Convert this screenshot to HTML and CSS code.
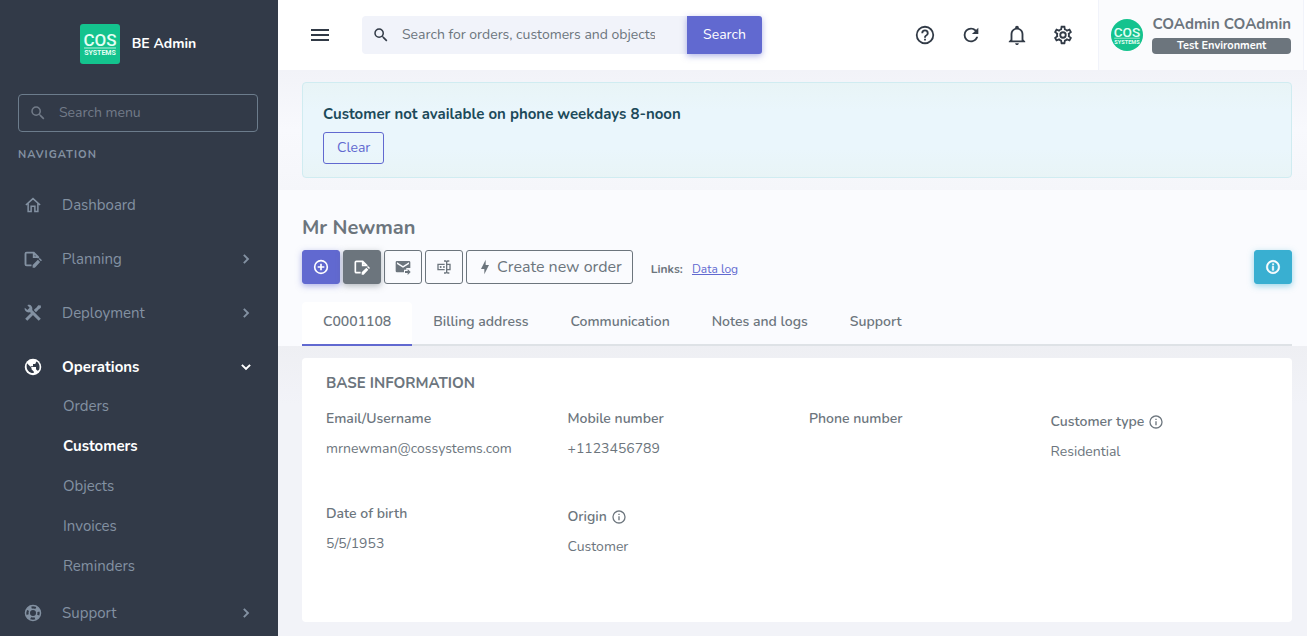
FILE: index.html
```
<!DOCTYPE html>
<html lang="en">
<head>
  <meta charset="utf-8">
  <title>BE Admin - Mr Newman</title>
  <link rel="stylesheet" href="styles.css">
</head>
<body>

  <!-- shared icons -->
  <svg class="icon-defs" aria-hidden="true">
    <symbol id="magnify" viewBox="0 0 24 24"><path d="M9.5,3A6.5,6.5 0 0,1 16,9.5C16,11.11 15.41,12.59 14.44,13.73L14.71,14H15.5L20.5,19L19,20.5L14,15.5V14.71L13.73,14.44C12.59,15.41 11.11,16 9.5,16A6.5,6.5 0 0,1 3,9.5A6.5,6.5 0 0,1 9.5,3M9.5,5C7,5 5,7 5,9.5C5,12 7,14 9.5,14C12,14 14,12 14,9.5C14,7 12,5 9.5,5Z"/></symbol>
    <symbol id="chevron" viewBox="0 0 24 24"><path d="M8.2,16.6L12.8,12L8.2,7.4L10,5.6L16.4,12L10,18.4Z"/></symbol>
    <symbol id="file-edit" viewBox="0 0 24 24"><path d="M10 20.5H3.5Q2 20.5 2 19V5Q2 3.5 3.5 3.5H13L19 9.5V11M13 3.5V9.5H19" fill="none" stroke="currentColor" stroke-width="2.5"/><path d="M11.5 23.5V20L18.5 13L21.5 16L14.5 23.5ZM19.5 12L21 10.5L24 13.5L22.5 15Z"/></symbol>
    <symbol id="info" viewBox="0 0 24 24"><path d="M11,9H13V7H11M12,20C7.59,20 4,16.41 4,12C4,7.59 7.59,4 12,4C16.41,4 20,7.59 20,12C20,16.41 16.41,20 12,20M12,2A10,10 0 0,0 2,12A10,10 0 0,0 12,22A10,10 0 0,0 22,12A10,10 0 0,0 12,2M11,17H13V11H11V17Z"/></symbol>
    <symbol id="cos" viewBox="0 0 40 40">
      <rect width="40" height="40" fill="#14c38e"/>
      <text x="20" y="22" text-anchor="middle" font-family="Roboto, sans-serif" font-size="17" font-weight="500" fill="#e4fff5">COS</text>
      <path d="M4 24H36" stroke="#b5f0dc"/>
      <text x="20" y="31" text-anchor="middle" font-family="Roboto, sans-serif" font-size="7" font-weight="700" fill="#e4fff5">SYSTEMS</text>
    </symbol>
  </svg>

  <div class="wrapper">
    <aside class="sidebar">
      <a class="brand" href="#">
        <svg class="brand-logo"><use href="#cos"/></svg>
        <span>BE Admin</span>
      </a>

      <label class="menu-search">
        <svg class="icon"><use href="#magnify"/></svg>
        <input type="search" placeholder="Search menu" aria-label="Search menu">
      </label>

      <h6 class="nav-title">NAVIGATION</h6>

      <nav>
        <ul class="menu">
          <li>
            <a href="#">
              <svg class="icon" viewBox="0 0 24 24"><path d="M2.5 12L12 3.5L21.5 12M5.500 10V20.5H9.5V13.5H14.5V20.5H18.5V10" fill="none" stroke="currentColor" stroke-width="2"/></svg>
              <span>Dashboard</span>
            </a>
          </li>
          <li>
            <a href="#">
              <svg class="icon"><use href="#file-edit"/></svg>
              <span>Planning</span>
              <svg class="arrow"><use href="#chevron"/></svg>
            </a>
          </li>
          <li>
            <a href="#">
              <svg class="icon" viewBox="0 0 24 24"><path d="M7.5 7.5L21 21M3 21L11 13M14.5 9.5L17 7" fill="none" stroke="currentColor" stroke-width="4"/><path d="M1 5L4.5 8L7.5 5L4.5 1.5C8 0 12 3 11 8L8 11C4 12 0 9 1 5ZM14 8L19 1.5L22.5 2L22.5 5L16 10Z"/></svg>
              <span>Deployment</span>
              <svg class="arrow"><use href="#chevron"/></svg>
            </a>
          </li>
          <li class="open">
            <a class="active" href="#">
              <svg class="icon" viewBox="0 0 24 24"><circle cx="12" cy="12" r="11"/><path d="M4 7L10 13V15L13 18V20C8 20.5 3 17 3.5 10ZM9 11H12V8H15L16.5 4.5C20 6 22 11 20 16L18 17L16 15V12H9Z" fill="#323a48"/></svg>
              <span>Operations</span>
              <svg class="arrow"><use href="#chevron"/></svg>
            </a>
            <ul class="submenu">
              <li><a href="#">Orders</a></li>
              <li><a class="active" href="#">Customers</a></li>
              <li><a href="#">Objects</a></li>
              <li><a href="#">Invoices</a></li>
              <li><a href="#">Reminders</a></li>
            </ul>
          </li>
          <li>
            <a href="#">
              <svg class="icon" viewBox="0 0 24 24" fill="none" stroke="currentColor"><circle cx="12" cy="12" r="10" stroke-width="2"/><circle cx="12" cy="12" r="5" stroke-width="2"/><circle cx="12" cy="12" r="7.5" stroke-width="5" stroke-dasharray="5.89" stroke-dashoffset="-2.95"/></svg>
              <span>Support</span>
              <svg class="arrow"><use href="#chevron"/></svg>
            </a>
          </li>
        </ul>
      </nav>
    </aside>

    <div class="page">
      <header class="topbar">
        <button class="icon-btn menu-toggle" type="button" aria-label="Toggle menu">
          <svg viewBox="0 0 24 24"><path d="M3,6H21V8H3V6M3,11H21V13H3V11M3,16H21V18H3V16Z"/></svg>
        </button>

        <form class="search">
          <label class="search-box">
            <svg class="icon"><use href="#magnify"/></svg>
            <input type="search" placeholder="Search for orders, customers and objects" aria-label="Search">
          </label>
          <button type="button">Search</button>
        </form>

        <div class="tools">
          <button class="icon-btn" type="button" aria-label="Help">
            <svg viewBox="0 0 24 24"><path d="M11,18H13V16H11V18M12,2A10,10 0 0,0 2,12A10,10 0 0,0 12,22A10,10 0 0,0 22,12A10,10 0 0,0 12,2M12,20C7.59,20 4,16.41 4,12C4,7.59 7.59,4 12,4C16.41,4 20,7.59 20,12C20,16.41 16.41,20 12,20M12,6A4,4 0 0,0 8,10H10A2,2 0 0,1 12,8A2,2 0 0,1 14,10C14,12 11,11.75 11,15H13C13,12.75 16,12.5 16,10A4,4 0 0,0 12,6Z"/></svg>
          </button>
          <button class="icon-btn" type="button" aria-label="Refresh">
            <svg viewBox="0 0 24 24"><path d="M17.65,6.35C16.2,4.9 14.21,4 12,4A8,8 0 0,0 4,12A8,8 0 0,0 12,20C15.73,20 18.84,17.45 19.73,14H17.65C16.83,16.33 14.61,18 12,18A6,6 0 0,1 6,12A6,6 0 0,1 12,6C13.66,6 15.14,6.69 16.22,7.78L13,11H20V4L17.65,6.35Z"/></svg>
          </button>
          <button class="icon-btn" type="button" aria-label="Notifications">
            <svg viewBox="0 0 24 24"><path d="M10 21H14C14 22.1 13.1 23 12 23S10 22.1 10 21M21 19V20H3V19L5 17V11C5 7.9 7 5.2 10 4.3V4C10 2.9 10.9 2 12 2S14 2.9 14 4V4.3C17 5.2 19 7.9 19 11V17L21 19M17 11C17 8.2 14.8 6 12 6S7 8.2 7 11V18H17V11Z"/></svg>
          </button>
          <button class="icon-btn" type="button" aria-label="Settings">
            <svg viewBox="0 0 24 24"><path d="M12,8A4,4 0 0,1 16,12A4,4 0 0,1 12,16A4,4 0 0,1 8,12A4,4 0 0,1 12,8M12,10A2,2 0 0,0 10,12A2,2 0 0,0 12,14A2,2 0 0,0 14,12A2,2 0 0,0 12,10M10,22C9.75,22 9.54,21.82 9.5,21.58L9.13,18.93C8.5,18.68 7.96,18.34 7.44,17.94L4.95,18.95C4.73,19.03 4.46,18.95 4.34,18.73L2.34,15.27C2.21,15.05 2.27,14.78 2.46,14.63L4.57,12.97L4.5,12L4.57,11L2.46,9.37C2.27,9.22 2.21,8.95 2.34,8.73L4.34,5.27C4.46,5.05 4.73,4.96 4.95,5.05L7.44,6.05C7.96,5.66 8.5,5.32 9.13,5.07L9.5,2.42C9.54,2.18 9.75,2 10,2H14C14.25,2 14.46,2.18 14.5,2.42L14.87,5.07C15.5,5.32 16.04,5.66 16.56,6.05L19.05,5.05C19.27,4.96 19.54,5.05 19.66,5.27L21.66,8.73C21.79,8.95 21.73,9.22 21.54,9.37L19.43,11L19.5,12L19.43,13L21.54,14.63C21.73,14.78 21.79,15.05 21.66,15.27L19.66,18.73C19.54,18.95 19.27,19.04 19.05,18.95L16.56,17.95C16.04,18.34 15.5,18.68 14.87,18.93L14.5,21.58C14.46,21.82 14.25,22 14,22H10M11.25,4L10.88,6.61C9.68,6.86 8.62,7.5 7.85,8.39L5.44,7.35L4.69,8.65L6.8,10.2C6.4,11.37 6.4,12.64 6.8,13.8L4.68,15.36L5.43,16.66L7.86,15.62C8.63,16.5 9.68,17.14 10.87,17.38L11.24,20H12.76L13.13,17.39C14.32,17.14 15.37,16.5 16.14,15.62L18.57,16.66L19.32,15.36L17.2,13.81C17.6,12.64 17.6,11.37 17.2,10.2L19.31,8.65L18.56,7.35L16.15,8.39C15.38,7.5 14.32,6.86 13.12,6.62L12.75,4H11.25Z"/></svg>
          </button>
        </div>

        <a class="user" href="#">
          <svg class="avatar"><use href="#cos"/></svg>
          <span class="user-text">
            <span class="user-name">COAdmin COAdmin</span>
            <span class="badge">Test Environment</span>
          </span>
        </a>
      </header>

      <section class="notice">
        <div class="alert" role="alert">
          <strong>Customer not available on phone weekdays 8-noon</strong>
          <button class="btn-clear" type="button">Clear</button>
        </div>
      </section>

      <section class="page-head">
        <h4>Mr Newman</h4>
        <div class="actions">
          <button class="btn btn-primary" type="button" aria-label="Add">
            <svg viewBox="0 0 24 24" fill="none" stroke="currentColor" stroke-width="2.5"><circle cx="12" cy="12" r="9.5"/><path d="M12 7V17M7 12H17"/></svg>
          </button>
          <button class="btn btn-secondary" type="button" aria-label="Edit">
            <svg><use href="#file-edit"/></svg>
          </button>
          <button class="btn" type="button" aria-label="Send email">
            <svg viewBox="0 0 24 24"><path d="M3 3H21Q23 3 23 5V13.5H17V16H13.5V20H3Q1 20 1 18V5Q1 3 3 3ZM3 5V7.5L12 13L21 7.5V5L12 10.5Z"/><path d="M15 18H19V15L23.5 19.5L19 24V21H15Z"/></svg>
          </button>
          <button class="btn" type="button" aria-label="Rename">
            <svg viewBox="0 0 24 24"><path d="M17,7H22V17H17V19A1,1 0 0,0 18,20H20V22H17.5C16.95,22 16,21.55 16,21C16,21.55 15.05,22 14.5,22H12V20H14A1,1 0 0,0 15,19V5A1,1 0 0,0 14,4H12V2H14.5C15.05,2 16,2.45 16,3C16,2.45 16.95,2 17.5,2H20V4H18A1,1 0 0,0 17,5V7M2,7H13V9H4V15H13V17H2V7M20,15V9H17V15H20M8.5,12A1.5,1.5 0 0,0 7,10.5A1.5,1.5 0 0,0 5.5,12A1.5,1.5 0 0,0 7,13.5A1.5,1.5 0 0,0 8.5,12M13,10.89C12.39,10.33 11.44,10.38 10.88,11C10.32,11.6 10.37,12.55 11,13.11C11.55,13.63 12.43,13.63 13,13.11V10.89Z"/></svg>
          </button>
          <button class="btn btn-order" type="button">
            <svg viewBox="0 0 24 24"><path d="M11 15H6L13 1V9H18L11 23V15Z"/></svg>
            Create new order
          </button>
          <span class="links">Links: <a href="#">Data log</a></span>
          <button class="btn btn-info" type="button" aria-label="Info">
            <svg stroke="currentColor"><use href="#info"/></svg>
          </button>
        </div>

        <nav class="tabs">
          <a class="active" href="#">C0001108</a>
          <a href="#">Billing address</a>
          <a href="#">Communication</a>
          <a href="#">Notes and logs</a>
          <a href="#">Support</a>
        </nav>
      </section>

      <main class="content">
        <div class="card">
          <h5>BASE INFORMATION</h5>
          <dl class="fields">
            <div><dt>Email/Username</dt><dd>mrnewman@cossystems.com</dd></div>
            <div><dt>Mobile number</dt><dd>+1123456789</dd></div>
            <div><dt>Phone number</dt><dd></dd></div>
            <div><dt class="has-info">Customer type <svg><use href="#info"/></svg></dt><dd>Residential</dd></div>
            <div><dt>Date of birth</dt><dd>5/5/1953</dd></div>
            <div><dt class="has-info">Origin <svg><use href="#info"/></svg></dt><dd>Customer</dd></div>
          </dl>
        </div>
      </main>
    </div>
  </div>

</body>
</html>
```
FILE: styles.css
```
* {
  box-sizing: border-box;
}

body {
  margin: 0;
  font-family: Nunito, Lato, sans-serif;
  font-size: 15px;
  line-height: 22px;
  color: #6c757d;
  background: #fafbfe;
}

a {
  color: inherit;
  text-decoration: none;
}

ul, dl, dd, h4, h5, h6 {
  margin: 0;
  padding: 0;
}

ul {
  list-style: none;
}

button, input {
  font: inherit;
}

button {
  cursor: pointer;
}

svg {
  flex: none;
}

svg:not([fill]) {
  fill: currentColor;
}

.icon-defs {
  display: none;
}

.icon {
  width: 18px;
  height: 18px;
}

.wrapper {
  display: flex;
  min-height: 100vh;
}

/* sidebar */
.sidebar {
  width: 278px;
  flex: none;
  padding: 24px 20px 0 18px;
  color: #8391a2;
  background: #323a48;
}

.brand {
  display: flex;
  align-items: center;
  justify-content: center;
  gap: 12px;
  height: 40px;
  margin-bottom: 30px;
  font-size: 14px;
  font-weight: 700;
  color: #fff;
}

.brand-logo {
  width: 40px;
  height: 40px;
  border-radius: 3px;
}

.menu-search {
  display: flex;
  align-items: center;
  gap: 12px;
  height: 38px;
  padding: 0 10px;
  border: 1px solid #6c7c8c;
  border-radius: 4px;
  font-size: 14px;
  color: #727b88;
}

input {
  flex: 1;
  min-width: 0;
  padding: 0;
  border: 0;
  outline: 0;
  background: none;
  color: inherit;
}

input::placeholder {
  color: inherit;
  opacity: 1;
}

input::-webkit-search-cancel-button {
  display: none;
}

.nav-title {
  margin: 12px 0;
  font-size: 11px;
  font-weight: 700;
  letter-spacing: 1px;
}

.menu > li {
  padding: 8px 0;
}

.menu > .open {
  padding-bottom: 0;
}

.menu > li > a {
  display: flex;
  align-items: center;
  gap: 20px;
  height: 38px;
  padding: 0 3px 0 6px;
}

.menu .arrow {
  width: 18px;
  height: 18px;
  margin-left: auto;
}

.menu .open .arrow {
  transform: rotate(90deg);
}

.menu .active {
  font-weight: 700;
  color: #fff;
}

.submenu a {
  display: block;
  padding: 9px 0 9px 45px;
}

/* top bar */
.page {
  flex: 1;
  min-width: 0;
  display: flex;
  flex-direction: column;
}

.topbar {
  display: flex;
  align-items: center;
  height: 70px;
  padding: 0 3px 0 30px;
  background: #fff;
}

.icon-btn {
  display: flex;
  padding: 0;
  border: 0;
  background: none;
  color: #313a46;
}

.icon-btn svg {
  width: 22px;
  height: 22px;
}

.menu-toggle svg {
  width: 24px;
  height: 24px;
}

.search {
  display: flex;
  width: 400px;
  height: 38px;
  margin-left: 30px;
  font-size: 14px;
}

.search-box {
  flex: 1;
  min-width: 0;
  display: flex;
  align-items: center;
  gap: 12px;
  padding: 0 32px 0 10px;
  border-radius: 4px 0 0 4px;
  background: #f1f3fa;
}

.search-box .icon {
  color: #313a46;
}

.search button {
  width: 75px;
  border: 0;
  border-radius: 0 3px 3px 0;
  color: #fff;
  background: #6169d0;
  box-shadow: 0 2px 6px rgba(97, 105, 208, 0.5);
}

.tools {
  display: flex;
  gap: 24px;
  margin: 0 24px 0 auto;
}

.user {
  display: flex;
  align-items: center;
  gap: 9px;
  height: 100%;
  padding: 0 12px;
  border: solid #f1f3fa;
  border-width: 0 1px;
  background: #fafbfd;
}

.avatar {
  width: 32px;
  height: 32px;
  border-radius: 50%;
}

.user-text {
  display: flex;
  flex-direction: column;
  gap: 3px;
  padding-bottom: 3px;
}

.user-name {
  font-weight: 700;
}

.badge {
  border-radius: 4px;
  font-size: 11px;
  font-weight: 700;
  line-height: 16px;
  text-align: center;
  color: #fff;
  background: #6c757d;
}

/* notice */
.notice {
  padding: 12px 15px 12px 24px;
  background: linear-gradient(#f2f3f8, #f8f9fd 50%, #f5f6fa);
}

.alert {
  padding: 20px 20px 13px;
  border: 1px solid #d0ecf1;
  border-radius: 4px;
  color: #1c4a5a;
  background: linear-gradient(#e8f4f6, #eaf6fc 30%, #eaf6fc 70%, #e8f4f6);
}

.alert strong {
  display: block;
}

.btn-clear {
  height: 32px;
  margin-top: 7px;
  padding: 0 13px;
  border: 1px solid #6169d0;
  border-radius: 3px;
  font-size: 14px;
  color: #6169d0;
  background: none;
}

/* page head */
.page-head {
  padding: 24px 15px 0 24px;
}

.page-head h4 {
  font-size: 20px;
  line-height: 28px;
  margin-bottom: 8px;
}

.actions {
  display: flex;
  align-items: center;
  gap: 3px;
  margin-bottom: 18px;
}

.btn {
  display: flex;
  align-items: center;
  justify-content: center;
  gap: 4px;
  width: 38px;
  height: 34px;
  padding: 0;
  border: 1px solid #6c757d;
  border-radius: 3px;
  color: #6c757d;
  background: none;
}

.btn svg {
  width: 16px;
  height: 16px;
}

.btn-primary {
  color: #fff;
  border-color: #6169d0;
  background: #6169d0;
  box-shadow: 0 2px 6px rgba(97, 105, 208, 0.5);
}

.btn-secondary {
  color: #fff;
  background: #6c757d;
  box-shadow: 0 2px 6px rgba(108, 117, 125, 0.5);
}

.btn-order {
  width: auto;
  padding: 0 10px;
  font-size: 16px;
}

.btn-info {
  margin-left: auto;
  color: #fff;
  border-color: #39afd1;
  background: #39afd1;
  box-shadow: 0 2px 6px rgba(57, 175, 209, 0.5);
}

.links {
  margin-left: 15px;
  padding-top: 4px;
  font-size: 12px;
  font-weight: 700;
}

.links a {
  margin-left: 6px;
  font-weight: 400;
  text-decoration: underline;
  color: #6169d0;
}

.tabs {
  display: flex;
  border-bottom: 2px solid #dee2e6;
}

.tabs a {
  margin-bottom: -2px;
  padding: 9px 21px 11px;
  border-bottom: 2px solid transparent;
  border-radius: 4px 4px 0 0;
  font-size: 14px;
  font-weight: 600;
}

.tabs .active {
  border-color: #6169d0;
  background: #fff;
}

/* content */
.content {
  flex: 1;
  padding: 12px 15px 14px 24px;
  background: linear-gradient(#eeeff3, #f2f3f8 20%);
}

.card {
  padding: 14px 0 24px 24px;
  border-radius: 4px;
  background: #fff;
}

.card h5 {
  margin-bottom: 14px;
  font-size: 15px;
}

.fields {
  display: grid;
  grid-template-columns: repeat(4, 1fr);
  grid-auto-rows: 95px;
  font-size: 14px;
}

.fields dt {
  margin-bottom: 8px;
  font-weight: 600;
}

.fields .has-info {
  display: flex;
  align-items: center;
  gap: 4px;
  padding-top: 3px;
}

.fields dt svg {
  width: 16px;
  height: 16px;
}
```
